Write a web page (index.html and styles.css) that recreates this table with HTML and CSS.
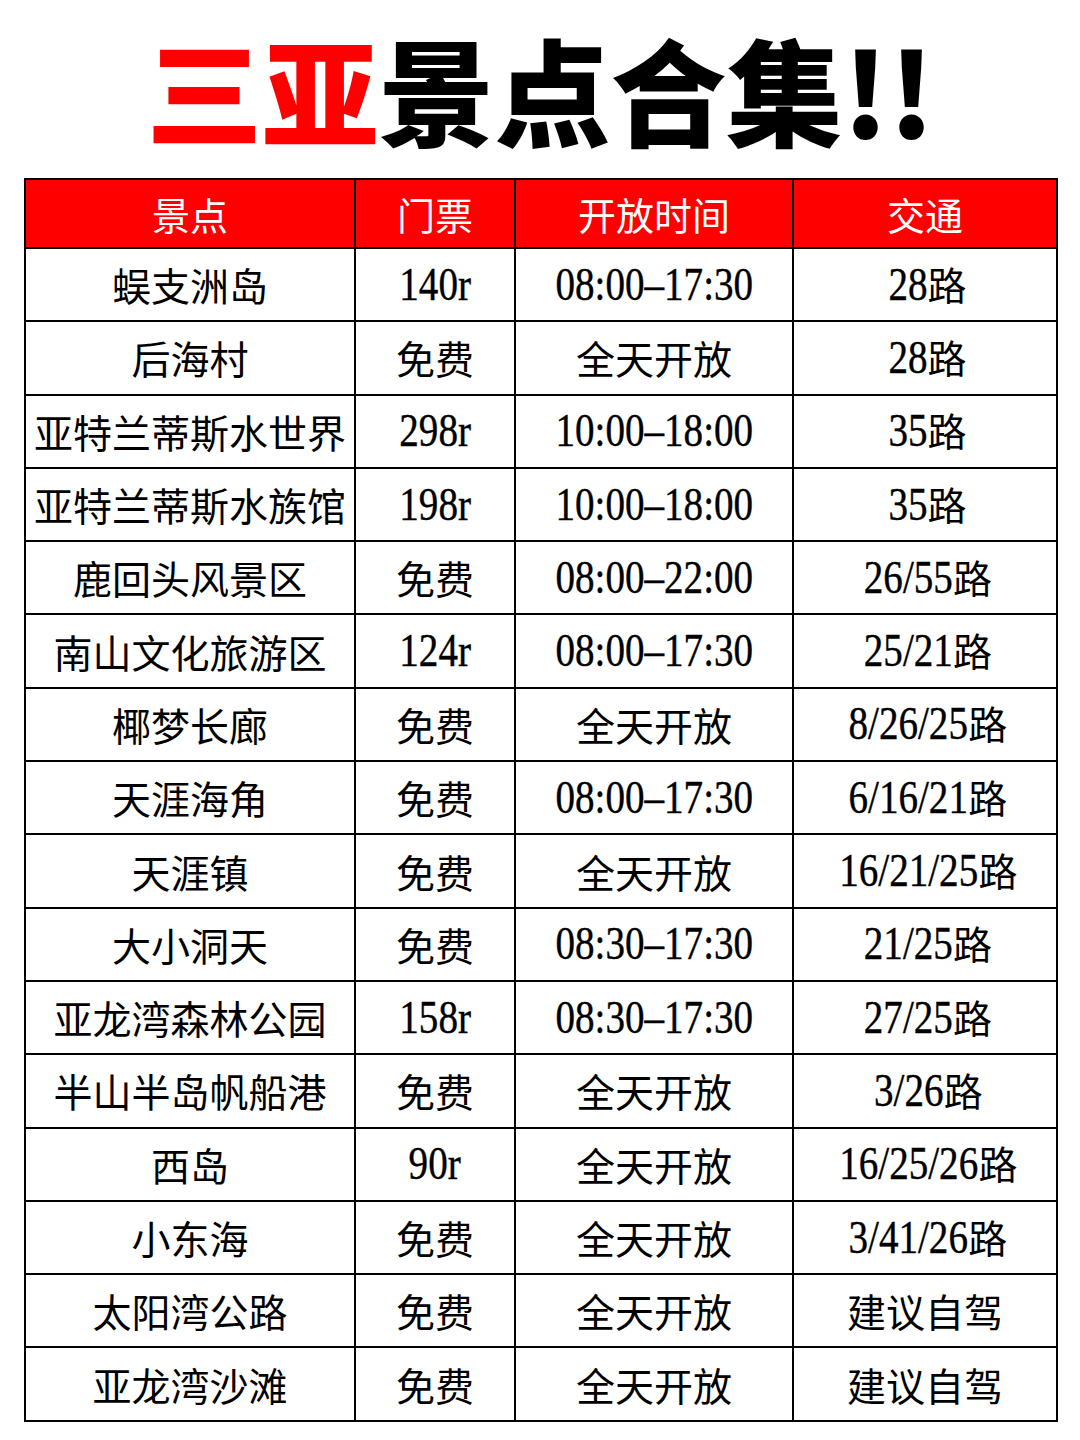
FILE: index.html
```html
<!DOCTYPE html>
<html lang="zh-CN">
<head>
<meta charset="utf-8">
<title>三亚景点合集</title>
<link rel="stylesheet" href="styles.css">
</head>
<body>
<div class="page">
  <h1 class="title"><span class="red">三亚</span>景点合集!!</h1>
  <table class="spots">
    <colgroup>
      <col class="c1"><col class="c2"><col class="c3"><col class="c4">
    </colgroup>
    <thead>
      <tr><th>景点</th><th>门票</th><th>开放时间</th><th>交通</th></tr>
    </thead>
    <tbody>
      <tr><td>蜈支洲岛</td><td><span class="n">140r</span></td><td><span class="n">08:00–17:30</span></td><td><span class="n">28<span class="z">路</span></span></td></tr>
      <tr><td>后海村</td><td>免费</td><td>全天开放</td><td><span class="n">28<span class="z">路</span></span></td></tr>
      <tr><td>亚特兰蒂斯水世界</td><td><span class="n">298r</span></td><td><span class="n">10:00–18:00</span></td><td><span class="n">35<span class="z">路</span></span></td></tr>
      <tr><td>亚特兰蒂斯水族馆</td><td><span class="n">198r</span></td><td><span class="n">10:00–18:00</span></td><td><span class="n">35<span class="z">路</span></span></td></tr>
      <tr><td>鹿回头风景区</td><td>免费</td><td><span class="n">08:00–22:00</span></td><td><span class="n">26/55<span class="z">路</span></span></td></tr>
      <tr><td>南山文化旅游区</td><td><span class="n">124r</span></td><td><span class="n">08:00–17:30</span></td><td><span class="n">25/21<span class="z">路</span></span></td></tr>
      <tr><td>椰梦长廊</td><td>免费</td><td>全天开放</td><td><span class="n">8/26/25<span class="z">路</span></span></td></tr>
      <tr><td>天涯海角</td><td>免费</td><td><span class="n">08:00–17:30</span></td><td><span class="n">6/16/21<span class="z">路</span></span></td></tr>
      <tr><td>天涯镇</td><td>免费</td><td>全天开放</td><td><span class="n">16/21/25<span class="z">路</span></span></td></tr>
      <tr><td>大小洞天</td><td>免费</td><td><span class="n">08:30–17:30</span></td><td><span class="n">21/25<span class="z">路</span></span></td></tr>
      <tr><td>亚龙湾森林公园</td><td><span class="n">158r</span></td><td><span class="n">08:30–17:30</span></td><td><span class="n">27/25<span class="z">路</span></span></td></tr>
      <tr><td>半山半岛帆船港</td><td>免费</td><td>全天开放</td><td><span class="n">3/26<span class="z">路</span></span></td></tr>
      <tr><td>西岛</td><td><span class="n">90r</span></td><td>全天开放</td><td><span class="n">16/25/26<span class="z">路</span></span></td></tr>
      <tr><td>小东海</td><td>免费</td><td>全天开放</td><td><span class="n">3/41/26<span class="z">路</span></span></td></tr>
      <tr><td>太阳湾公路</td><td>免费</td><td>全天开放</td><td>建议自驾</td></tr>
      <tr><td>亚龙湾沙滩</td><td>免费</td><td>全天开放</td><td>建议自驾</td></tr>
    </tbody>
  </table>
</div>
</body>
</html>
```
FILE: styles.css
```css
html, body {
  margin: 0;
  padding: 0;
  background: #ffffff;
}

.page {
  width: 1080px;
  padding: 29px 23px 0 24px;
  box-sizing: border-box;
  font-family: "Noto Sans CJK SC", "Noto Sans", sans-serif;
  color: #000;
}

.title {
  margin: 0 0 33px 0;
  height: 116px;
  font-size: 116px;
  line-height: 116px;
  font-weight: 900;
  text-align: center;
  white-space: nowrap;
  font-family: "Noto Sans CJK SC", sans-serif;
}

.red {
  color: #ff0000;
}

.spots {
  width: 1032px;
  table-layout: fixed;
  border-collapse: collapse;
  border: 2px solid #000;
}

.c1 { width: 330px; }
.c2 { width: 160px; }
.c3 { width: 278px; }
.c4 { width: 264px; }

.spots th,
.spots td {
  border: 2px solid #000;
  padding: 0;
  text-align: center;
  vertical-align: middle;
  white-space: nowrap;
}

.spots th {
  background: #ff0000;
  color: #ffffff;
  font-weight: 400;
  font-size: 38px;
  height: 67px;
  line-height: 1;
}

.spots td {
  height: 71.3px;
  font-size: 39px;
  line-height: 1;
  font-weight: 400;
}

.n {
  display: inline-block;
  font-family: "Liberation Serif", "Noto Sans CJK SC", serif;
  font-size: 46px;
  -webkit-text-stroke: 0.4px #000;
  transform: scaleX(0.85);
  transform-origin: center;
  line-height: 1;
}

.z {
  display: inline-block;
  font-family: "Noto Sans CJK SC", sans-serif;
  font-size: 39px;
  -webkit-text-stroke: 0;
  transform: scaleX(1.1765);
  transform-origin: left center;
}
```
